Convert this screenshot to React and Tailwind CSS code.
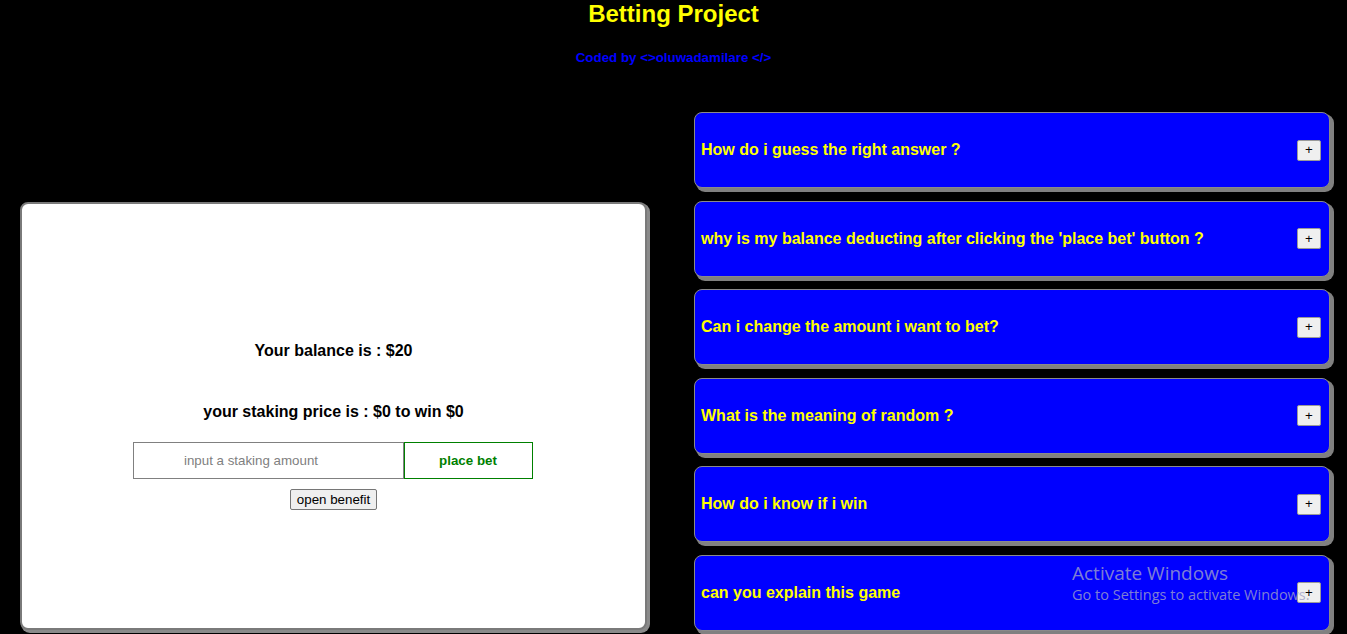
import React, { useState } from 'react';

const questions = [
  'How do i guess the right answer ?',
  "why is my balance deducting after clicking the 'place bet' button ?",
  'Can i change the amount i want to bet?',
  'What is the meaning of random ?',
  'How do i know if i win',
  'can you explain this game',
];

function FaqCard({ text }) {
  const [open, setOpen] = useState(false);
  return (
    <div className="h-[76px] flex items-center justify-between pl-[6px] pr-[8px] bg-[#0000ff] border border-[#8a8a8a] rounded-[8px] shadow-[3px_3px_0_1px_#808080] mb-[12.5px]">
      <span className="text-[16px] font-bold text-[#ffff00] leading-[18px]">{text}</span>
      <button
        type="button"
        onClick={() => setOpen(!open)}
        className="w-[24px] h-[21px] bg-[#efefef] border border-[#9a9a9a] rounded-[2px] text-[13.33px] leading-none text-black"
      >
        {open ? '-' : '+'}
      </button>
    </div>
  );
}

function BetCard() {
  const [stake, setStake] = useState('');
  return (
    <div className="w-[627px] h-[428px] bg-white border-2 border-[#7a7a7a] rounded-[8px] shadow-[2px_2px_0_1px_#8a8a8a] flex flex-col items-center pt-[138px]">
      <p className="text-[16px] font-bold leading-[18px] text-black">Your balance is : $20</p>
      <p className="mt-[43px] text-[16px] font-bold leading-[18px] text-black">your staking price is : $0 to win $0</p>
      <div className="mt-[21px] flex -translate-x-[1px]">
        <input
          value={stake}
          onChange={(e) => setStake(e.target.value)}
          placeholder="input a staking amount"
          className="w-[271px] h-[37px] pr-[34px] border border-[#808080] text-center text-[13.33px] text-black placeholder:text-[#808080] outline-none"
        />
        <button
          type="button"
          className="w-[129px] h-[37px] border border-[#008000] bg-white text-[#008000] text-[13.33px] font-bold"
        >
          place bet
        </button>
      </div>
      <button
        type="button"
        className="mt-[10px] h-[21px] px-[6px] bg-[#efefef] border border-[#767676] rounded-[2px] text-[13.33px] leading-none text-black"
      >
        open benefit
      </button>
    </div>
  );
}

export default function App() {
  return (
    <div className="relative min-h-[634px] bg-black font-['Liberation_Sans',Arial,sans-serif] overflow-hidden">
      <h1 className="text-center text-[24px] font-bold leading-[28px] text-[#ffff00]">Betting Project</h1>
      <p className="mt-[22px] text-center text-[13.33px] font-bold leading-[15px] text-[#0000ff]">
        Coded by &lt;&gt;oluwadamilare &lt;/&gt;
      </p>
      <div className="mt-[47px] flex items-start pl-[20px]">
        <div className="mt-[90px]">
          <BetCard />
        </div>
        <div className="ml-[47px] w-[636px]">
          {questions.map((q) => (
            <FaqCard key={q} text={q} />
          ))}
        </div>
      </div>
      <div className="absolute left-[1072px] top-[561px] pointer-events-none font-['Open_Sans',sans-serif] text-[#a0a0c8]/80">
        <div className="text-[19px] leading-[24px]">Activate Windows</div>
        <div className="text-[14.5px] leading-[20px]">Go to Settings to activate Windows.</div>
      </div>
    </div>
  );
}
